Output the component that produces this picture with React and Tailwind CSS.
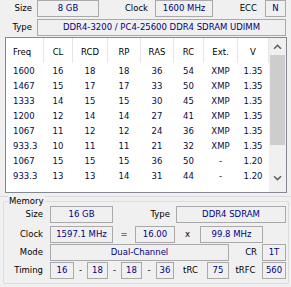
import React from 'react';

const rows = [
  ['1600', '16', '18', '18', '36', '54', 'XMP', '1.35'],
  ['1467', '15', '17', '17', '33', '50', 'XMP', '1.35'],
  ['1333', '14', '15', '15', '30', '45', 'XMP', '1.35'],
  ['1200', '12', '14', '14', '27', '41', 'XMP', '1.35'],
  ['1067', '11', '12', '12', '24', '36', 'XMP', '1.35'],
  ['933.3', '10', '11', '11', '21', '32', 'XMP', '1.35'],
  ['1067', '15', '15', '15', '36', '50', '-', '1.20'],
  ['933.3', '13', '13', '14', '31', '44', '-', '1.20'],
];

const headers = ['Freq', 'CL', 'RCD', 'RP', 'RAS', 'RC', 'Ext.', 'V'];
// column widths incl. the right separator line
const colW = ['w-[38px]', 'w-[29px]', 'w-[35px]', 'w-[33px]', 'w-[33px]', 'w-[30px]', 'w-[34px]', 'w-[31px]'];

const Box = ({ w, children, className = '' }) => (
  <div
    className={`${w} h-[17px] shrink-0 flex items-center justify-center border border-[#a9a9a9] bg-[#f0f0f0] text-[#000080] ${className}`}
  >
    {children}
  </div>
);

const Chevron = ({ down }) => (
  <svg width="9" height="6" viewBox="0 0 9 6">
    <path
      d={down ? 'M1 1.2 L4.5 4.6 L8 1.2' : 'M1 4.8 L4.5 1.4 L8 4.8'}
      fill="none"
      stroke="#606060"
      strokeWidth="1.5"
    />
  </svg>
);

export default function App() {
  return (
    <div
      className="w-[291px] h-[287px] overflow-hidden bg-[#f0f0f0] text-[8.5px] text-black"
      style={{ fontFamily: '"DejaVu Sans", Verdana, sans-serif' }}
    >
      {/* top rows */}
      <div className="flex items-center h-[17px]">
        <span className="w-[32px] text-right">Size</span>
        <Box w="w-[62px]" className="ml-[5px]">8 GB</Box>
        <span className="w-[49px] text-right">Clock</span>
        <Box w="w-[58px]" className="ml-[7px]">1600 MHz</Box>
        <span className="w-[44px] text-right">ECC</span>
        <Box w="w-[21px]" className="ml-[8px]">N</Box>
      </div>
      <div className="flex items-center h-[17px] mt-[2px]">
        <span className="w-[32px] text-right">Type</span>
        <Box w="w-[249px]" className="ml-[5px]">DDR4-3200 / PC4-25600 DDR4 SDRAM UDIMM</Box>
      </div>

      {/* SPD table */}
      <div className="ml-[5px] mt-[1px] w-[282px] h-[156px] border border-[#828790] bg-white flex">
        <div className="w-[263px] flex flex-col">
          <div className="flex h-[25px]">
            {headers.map((h, i) => (
              <div
                key={h}
                className={`${colW[i]} shrink-0 flex items-center pt-[3px] border-r border-[#e5e5e5] ${
                  i === 0 ? 'pl-[7px]' : 'justify-center'
                }`}
              >
                {h}
              </div>
            ))}
          </div>
          {rows.map((r, ri) => (
            <div key={ri} className="flex h-[15px] items-center pt-[2px] text-[#0a0a40]">
              {r.map((c, i) => (
                <div
                  key={i}
                  className={`${colW[i]} shrink-0 ${i === 0 ? 'pl-[7px]' : 'text-center pr-[1px]'}`}
                >
                  {c}
                </div>
              ))}
            </div>
          ))}
        </div>
        <div className="w-[17px] bg-[#f0f0f0] flex flex-col">
          <div className="h-[17px] flex items-center justify-center">
            <Chevron />
          </div>
          <div className="mx-[1px] h-[90px] bg-[#cdcdcd]" />
          <div className="flex-1" />
          <div className="h-[17px] mb-[6px] flex items-center justify-center">
            <Chevron down />
          </div>
        </div>
      </div>

      <div className="mt-[3px] h-[1px] bg-[#dadada]" />

      {/* Memory group */}
      <div className="relative ml-[3px] mt-[4px] w-[286px] h-[83px] border border-[#dcdcdc] rounded-[2px]">
        <span className="absolute left-[4px] -top-[7px] px-[1px] leading-[12px] bg-[#f0f0f0]">Memory</span>
        <div className="flex flex-col pt-[4px]">
          <div className="flex items-center">
            <span className="w-[39px] text-right">Size</span>
            <Box w="w-[63px]" className="ml-[7px]">16 GB</Box>
            <span className="w-[57px] text-right">Type</span>
            <Box w="w-[110px]" className="ml-[6px]">DDR4 SDRAM</Box>
          </div>
          <div className="flex items-center mt-[3px]">
            <span className="w-[39px] text-right">Clock</span>
            <Box w="w-[63px]" className="ml-[7px]">1597.1 MHz</Box>
            <span className="w-[22px] text-center">=</span>
            <Box w="w-[40px]">16.00</Box>
            <span className="w-[25px] text-center">x</span>
            <Box w="w-[63px]">99.8 MHz</Box>
          </div>
          <div className="flex items-center mt-[1px]">
            <span className="w-[39px] text-right">Mode</span>
            <Box w="w-[179px]" className="ml-[7px]">Dual-Channel</Box>
            <span className="w-[28px] text-right">CR</span>
            <Box w="w-[24px]" className="ml-[5px]">1T</Box>
          </div>
          <div className="flex items-center mt-[1px]">
            <span className="w-[39px] text-right">Timing</span>
            <Box w="w-[24px]" className="ml-[7px]">16</Box>
            <span className="w-[13px] text-center">-</span>
            <Box w="w-[21px]">18</Box>
            <span className="w-[13px] text-center">-</span>
            <Box w="w-[21px]">18</Box>
            <span className="w-[14px] text-center">-</span>
            <Box w="w-[18px]">36</Box>
            <span className="w-[33px] text-center">tRC</span>
            <Box w="w-[22px]">75</Box>
            <span className="w-[33px] text-center">tRFC</span>
            <Box w="w-[24px]">560</Box>
          </div>
        </div>
      </div>
    </div>
  );
}
